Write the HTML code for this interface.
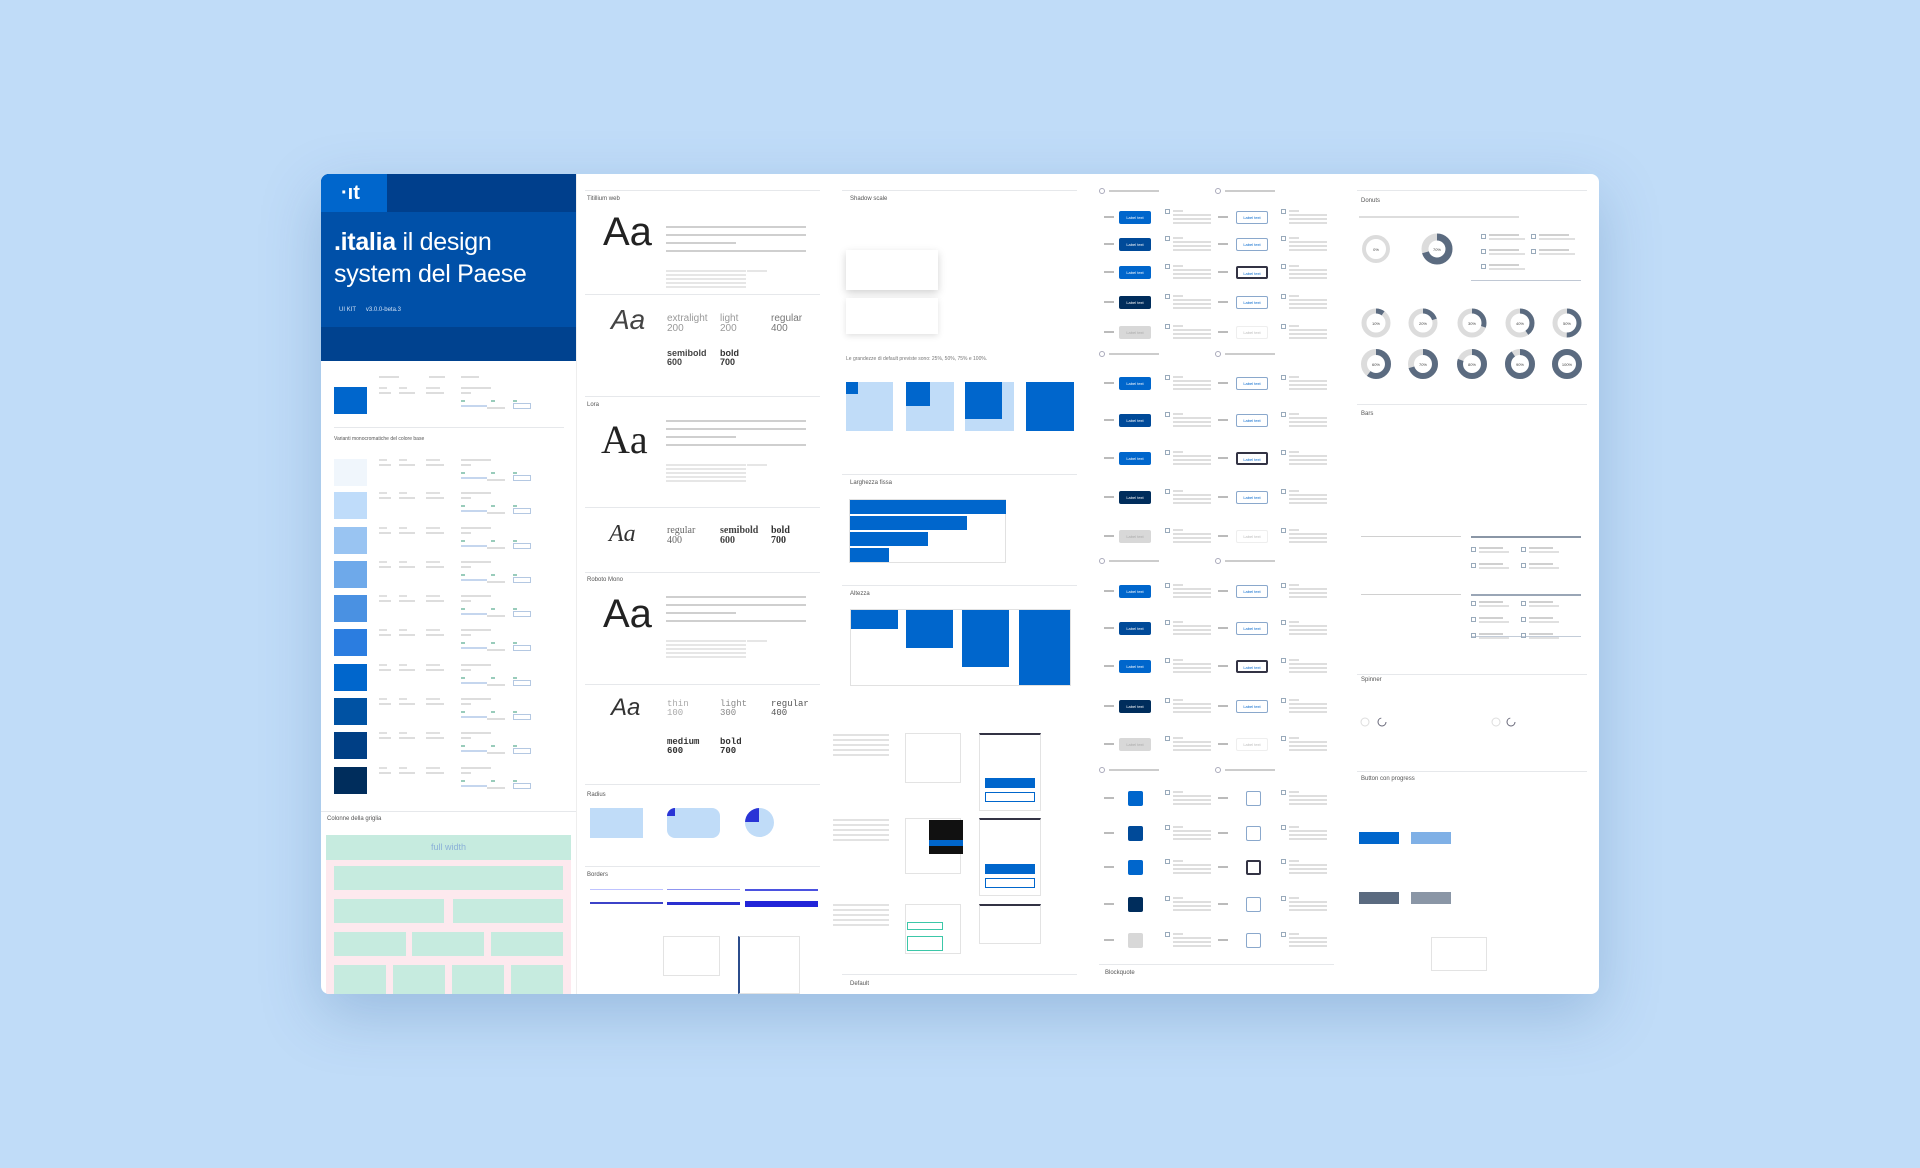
<!DOCTYPE html>
<html><head><meta charset="utf-8">
<style>
*{margin:0;padding:0;box-sizing:border-box}
body{width:1920px;height:1168px;background:#c0dcf8;overflow:hidden;font-family:"Liberation Sans",sans-serif;position:relative}
.card{position:absolute;left:321px;top:174px;width:1278px;height:820px;background:#fff;border-radius:8px;overflow:hidden;box-shadow:0 20px 60px rgba(40,90,150,.25)}
.a{position:absolute}
.ln{position:absolute;height:2px;background:#d4d8dd}
.hr{position:absolute;height:1px;background:#e6e8eb}
.lbl{position:absolute;font-size:5px;color:#777}
.h{position:absolute;font-size:6px;color:#555}
.big{position:absolute;color:#222;line-height:1}
.btn{position:absolute;width:32px;height:13px;border-radius:2px;font-size:4px;color:#fff;text-align:center;line-height:13px}
.ob{position:absolute;width:32px;height:13px;border:1px solid #8aa8cc;border-radius:2px;font-size:4px;color:#06c;text-align:center;line-height:11px;background:#fff}
</style></head><body>
<div class="card" id="c">
 <div class="a" style="left:0;top:0;width:255px;height:187px;background:#0050a8"></div>
 <div class="a" style="left:0;top:0;width:255px;height:38px;background:#003f8c"></div>
 <div class="a" style="left:0;top:0;width:66px;height:38px;background:#0066cc;color:#fff;font-weight:bold;font-size:20px;line-height:38px;padding-left:20px">·ıt</div>
 <div class="a" style="left:0;top:153px;width:255px;height:34px;background:#00428f"></div>
 <div class="a" style="left:13px;top:52px;color:#fff;font-size:25px;line-height:32px;width:210px;letter-spacing:-0.3px"><b>.italia</b> il design system del Paese</div>
 <div class="a" style="left:18px;top:133px;color:#cfe0f5;font-size:6px">UI KIT &nbsp;&nbsp;&nbsp;&nbsp; v3.0.0-beta.3</div>

 <div class="h" style="left:13px;top:262px;font-size:5px">Varianti monocromatiche del colore base</div>
 <div class="hr" style="left:13px;top:253px;width:230px"></div>
 <div class="h" style="left:6px;top:642px">Colonne della griglia</div>
 <div class="hr" style="left:0;top:637px;width:255px"></div>
 <div class="a" style="left:5px;top:661px;width:245px;height:159px;background:#fde9ee"></div>
 <div class="a" style="left:5px;top:661px;width:245px;height:25px;background:#c6ebdf;color:#8bb0d8;font-size:9px;text-align:center;line-height:25px">full width</div>
 <div class="a" style="left:13px;top:692px;width:229px;height:24px;background:#c6ebdf"></div>
 <div class="a" style="left:13px;top:725px;width:110px;height:24px;background:#c6ebdf"></div>
 <div class="a" style="left:132px;top:725px;width:110px;height:24px;background:#c6ebdf"></div>
 <div class="a" style="left:13px;top:758px;width:72px;height:24px;background:#c6ebdf"></div>
 <div class="a" style="left:91px;top:758px;width:72px;height:24px;background:#c6ebdf"></div>
 <div class="a" style="left:170px;top:758px;width:72px;height:24px;background:#c6ebdf"></div>
 <div class="a" style="left:13px;top:791px;width:52px;height:29px;background:#c6ebdf"></div>
 <div class="a" style="left:72px;top:791px;width:52px;height:29px;background:#c6ebdf"></div>
 <div class="a" style="left:131px;top:791px;width:52px;height:29px;background:#c6ebdf"></div>
 <div class="a" style="left:190px;top:791px;width:52px;height:29px;background:#c6ebdf"></div>

 <div class="hr" style="left:264px;top:16px;width:235px"></div>
 <div class="h" style="left:266px;top:22px">Titillium web</div>
 <div class="big" style="left:282px;top:38px;font-size:40px;font-weight:300">Aa</div>
 <div class="hr" style="left:264px;top:120px;width:235px"></div>
 <div class="big" style="left:290px;top:132px;font-size:28px;font-style:italic;font-weight:300;color:#444">Aa</div>
 <div class="big" style="left:346px;top:140px;font-size:10px;color:#999">extralight<br>200</div>
 <div class="big" style="left:399px;top:140px;font-size:10px;color:#999">light<br>200</div>
 <div class="big" style="left:450px;top:140px;font-size:10px;color:#777">regular<br>400</div>
 <div class="big" style="left:346px;top:175px;font-size:9px;font-weight:bold;color:#444">semibold<br>600</div>
 <div class="big" style="left:399px;top:175px;font-size:9px;font-weight:bold;color:#333">bold<br>700</div>
 <div class="hr" style="left:264px;top:222px;width:235px"></div>
 <div class="h" style="left:266px;top:228px">Lora</div>
 <div class="big" style="left:280px;top:246px;font-size:40px;font-family:'Liberation Serif',serif">Aa</div>
 <div class="hr" style="left:264px;top:333px;width:235px"></div>
 <div class="big" style="left:288px;top:348px;font-size:24px;font-style:italic;font-family:'Liberation Serif',serif;color:#333">Aa</div>
 <div class="big" style="left:346px;top:352px;font-size:10px;font-family:'Liberation Serif',serif;color:#666">regular<br>400</div>
 <div class="big" style="left:399px;top:352px;font-size:10px;font-weight:bold;font-family:'Liberation Serif',serif;color:#444">semibold<br>600</div>
 <div class="big" style="left:450px;top:352px;font-size:10px;font-weight:bold;font-family:'Liberation Serif',serif;color:#333">bold<br>700</div>
 <div class="hr" style="left:264px;top:398px;width:235px"></div>
 <div class="h" style="left:266px;top:403px">Roboto Mono</div>
 <div class="big" style="left:282px;top:420px;font-size:40px;font-weight:300">Aa</div>
 <div class="hr" style="left:264px;top:510px;width:235px"></div>
 <div class="big" style="left:290px;top:522px;font-size:24px;font-style:italic;color:#333">Aa</div>
 <div class="big" style="left:346px;top:526px;font-size:9px;font-family:'Liberation Mono',monospace;color:#aaa">thin<br>100</div>
 <div class="big" style="left:399px;top:526px;font-size:9px;font-family:'Liberation Mono',monospace;color:#888">light<br>300</div>
 <div class="big" style="left:450px;top:526px;font-size:9px;font-family:'Liberation Mono',monospace;color:#555">regular<br>400</div>
 <div class="big" style="left:346px;top:564px;font-size:9px;font-weight:bold;font-family:'Liberation Mono',monospace;color:#333">medium<br>600</div>
 <div class="big" style="left:399px;top:564px;font-size:9px;font-weight:bold;font-family:'Liberation Mono',monospace;color:#333">bold<br>700</div>
 <div class="hr" style="left:264px;top:610px;width:235px"></div>
 <div class="h" style="left:266px;top:618px">Radius</div>
 <div class="a" style="left:269px;top:634px;width:53px;height:30px;background:#c0dcf8"></div>
 <div class="a" style="left:346px;top:634px;width:53px;height:30px;background:#c0dcf8;border-radius:8px;overflow:hidden"><div style="width:8px;height:8px;background:#2a34d6"></div></div>
 <div class="a" style="left:424px;top:634px;width:29px;height:29px;background:#c0dcf8;border-radius:50%;overflow:hidden"><div style="width:14px;height:14px;background:#2a34d6"></div></div>
 <div class="hr" style="left:264px;top:692px;width:235px"></div>
 <div class="h" style="left:266px;top:698px">Borders</div>
 <div class="a" style="left:269px;top:715px;width:73px;height:1px;background:#bfc3ff"></div>
 <div class="a" style="left:346px;top:715px;width:73px;height:1px;background:#8f95f0"></div>
 <div class="a" style="left:424px;top:715px;width:73px;height:2px;background:#4b52e0"></div>
 <div class="a" style="left:269px;top:728px;width:73px;height:2px;background:#3c42c8"></div>
 <div class="a" style="left:346px;top:728px;width:73px;height:3px;background:#2a30d0"></div>
 <div class="a" style="left:424px;top:727px;width:73px;height:6px;background:#2224d8"></div>
 <div class="a" style="left:342px;top:762px;width:57px;height:40px;border:1px solid #e3e3e3"></div>
 <div class="a" style="left:417px;top:762px;width:62px;height:58px;border:1px solid #e3e3e3;border-left:2px solid #2b4c8c"></div>

 <div class="hr" style="left:521px;top:16px;width:235px"></div>
 <div class="h" style="left:529px;top:22px">Shadow scale</div>
 <div class="a" style="left:525px;top:76px;width:92px;height:40px;background:#fff;box-shadow:0 3px 8px rgba(0,0,0,.18)"></div>
 <div class="a" style="left:525px;top:124px;width:92px;height:36px;background:#fff;box-shadow:0 2px 6px rgba(0,0,0,.12)"></div>
 <div class="lbl" style="left:525px;top:182px">Le grandezze di default previste sono: 25%, 50%, 75% e 100%.</div>
 <div class="a" style="left:525px;top:208px;width:47px;height:49px;background:#c0dcf8"><div style="width:12px;height:12px;background:#0066cc"></div></div>
 <div class="a" style="left:585px;top:208px;width:48px;height:49px;background:#c0dcf8"><div style="width:24px;height:24px;background:#0066cc"></div></div>
 <div class="a" style="left:644px;top:208px;width:49px;height:49px;background:#c0dcf8"><div style="width:37px;height:37px;background:#0066cc"></div></div>
 <div class="a" style="left:705px;top:208px;width:48px;height:49px;background:#0066cc"></div>
 <div class="hr" style="left:521px;top:300px;width:235px"></div>
 <div class="h" style="left:529px;top:306px">Larghezza fissa</div>
 <div class="a" style="left:528px;top:325px;width:157px;height:64px;border:1px solid #e1e1e1"></div>
 <div class="a" style="left:529px;top:326px;width:156px;height:14px;background:#0066cc"></div>
 <div class="a" style="left:529px;top:342px;width:117px;height:14px;background:#0066cc"></div>
 <div class="a" style="left:529px;top:358px;width:78px;height:14px;background:#0066cc"></div>
 <div class="a" style="left:529px;top:374px;width:39px;height:14px;background:#0066cc"></div>
 <div class="hr" style="left:521px;top:411px;width:235px"></div>
 <div class="h" style="left:529px;top:417px">Altezza</div>
 <div class="a" style="left:529px;top:435px;width:221px;height:77px;border:1px solid #e1e1e1"></div>
 <div class="a" style="left:530px;top:436px;width:47px;height:19px;background:#0066cc"></div>
 <div class="a" style="left:585px;top:436px;width:47px;height:38px;background:#0066cc"></div>
 <div class="a" style="left:641px;top:436px;width:47px;height:57px;background:#0066cc"></div>
 <div class="a" style="left:698px;top:436px;width:51px;height:75px;background:#0066cc"></div>
 <div class="a" style="left:584px;top:559px;width:56px;height:50px;border:1px solid #e3e3e3"></div>
 <div class="a" style="left:658px;top:559px;width:62px;height:78px;border:1px solid #e3e3e3;border-top:2px solid #334"></div>
 <div class="a" style="left:664px;top:604px;width:50px;height:10px;background:#0066cc"></div>
 <div class="a" style="left:664px;top:618px;width:50px;height:10px;border:1px solid #06c"></div>
 <div class="a" style="left:584px;top:644px;width:56px;height:56px;border:1px solid #e3e3e3"></div>
 <div class="a" style="left:608px;top:646px;width:34px;height:34px;background:#111"><div style="margin-top:20px;height:6px;background:#0066cc"></div></div>
 <div class="a" style="left:658px;top:644px;width:62px;height:78px;border:1px solid #e3e3e3;border-top:2px solid #334"></div>
 <div class="a" style="left:664px;top:690px;width:50px;height:10px;background:#0066cc"></div>
 <div class="a" style="left:664px;top:704px;width:50px;height:10px;border:1px solid #06c"></div>
 <div class="a" style="left:584px;top:730px;width:56px;height:50px;border:1px solid #e3e3e3"></div>
 <div class="a" style="left:586px;top:748px;width:36px;height:8px;border:1px solid #3cc7a8"></div>
 <div class="a" style="left:586px;top:762px;width:36px;height:15px;border:1px solid #3cc7a8"></div>
 <div class="a" style="left:658px;top:730px;width:62px;height:40px;border:1px solid #e3e3e3;border-top:2px solid #334"></div>
 <div class="hr" style="left:521px;top:800px;width:235px"></div>
 <div class="h" style="left:529px;top:807px">Default</div>

 <div class="hr" style="left:1036px;top:16px;width:230px"></div>
 <div class="h" style="left:1040px;top:24px">Donuts</div>
 <div class="hr" style="left:1036px;top:230px;width:230px"></div>
 <div class="h" style="left:1040px;top:237px">Bars</div>
 <div class="hr" style="left:1036px;top:500px;width:230px"></div>
 <div class="h" style="left:1040px;top:503px">Spinner</div>
 <div class="hr" style="left:1036px;top:597px;width:230px"></div>
 <div class="h" style="left:1040px;top:602px">Button con progress</div>
 <div class="a" style="left:1038px;top:658px;width:40px;height:12px;background:#0066cc"></div>
 <div class="a" style="left:1090px;top:658px;width:40px;height:12px;background:#7fb0e6"></div>
 <div class="a" style="left:1038px;top:718px;width:40px;height:12px;background:#5b6b80"></div>
 <div class="a" style="left:1090px;top:718px;width:40px;height:12px;background:#8a96a6"></div>
 <div class="a" style="left:1110px;top:763px;width:56px;height:34px;border:1px solid #e3e3e3"></div>
 <div class="a" style="left:1150px;top:106px;width:110px;height:1px;background:#c0c8d4"></div>
 <div class="a" style="left:1150px;top:362px;width:110px;height:2px;background:#8a96a6"></div>
 <div class="a" style="left:1040px;top:362px;width:100px;height:1px;background:#d0d0d0"></div>
 <div class="a" style="left:1040px;top:420px;width:100px;height:1px;background:#d0d0d0"></div>
 <div class="a" style="left:1150px;top:420px;width:110px;height:2px;background:#9aa6b6"></div>
 <div class="a" style="left:1150px;top:462px;width:110px;height:1px;background:#c3ccd8"></div>
 <div class="hr" style="left:778px;top:790px;width:235px"></div>
 <div class="h" style="left:784px;top:796px">Blockquote</div>
 <div class="a" style="left:255px;top:0;width:1px;height:820px;background:#eee"></div>
 <svg class="a" id="dn" style="left:0;top:0" width="1278" height="820"></svg>
</div>
<script>
var c=document.getElementById('c');
function add(h){c.insertAdjacentHTML('beforeend',h)}
function ln(x,y,w,col){add('<div class="ln" style="left:'+x+'px;top:'+y+'px;width:'+w+'px;'+(col?'background:'+col:'')+'"></div>')}
var cols=['#0066cc','#f0f6fc','#bfdcfa','#99c4f2','#6ea9ea','#4a91e2','#2b7de0','#0066cc','#0052a3','#003f85','#002d5c'];
var ys=[213,285,318,353,387,421,455,490,524,558,593];
cols.forEach(function(cl,i){var y=ys[i];
 add('<div class="a" style="left:13px;top:'+y+'px;width:33px;height:27px;background:'+cl+'"></div>');
 ln(58,y,8,'#e0e0e0');ln(78,y,8,'#e0e0e0');ln(58,y+5,12,'#ddd');ln(78,y+5,16,'#ddd');ln(105,y,14,'#e0e0e0');ln(105,y+5,18,'#ddd');
 ln(140,y,30,'#ddd');ln(140,y+5,10,'#ddd');ln(140,y+13,4,'#9cb');ln(170,y+13,4,'#9cb');ln(192,y+13,4,'#9cb');
 ln(140,y+18,26,'#c5d6ee');ln(166,y+20,18,'#ddd');
 add('<div class="a" style="left:192px;top:'+(y+16)+'px;width:18px;height:6px;border:1px solid #b4c8e2"></div>');
});
ln(58,202,20,'#ddd');ln(108,202,16,'#ddd');ln(140,202,18,'#ddd');
[[52,48],[246,46],[422,46]].forEach(function(p){var y=p[0];
 for(var k=0;k<4;k++)ln(345,y+k*8,(k==2?70:140),'#cfcfcf');
 for(var k=0;k<5;k++)ln(345,y+44+k*4,80,'#e6e6e6');
 ln(426,y+44,20,'#e6e6e6');
});
var rows1=[37,64,92,122,152],rows2=[203,240,278,317,356],rows3=[411,448,486,526,564],rows4=[618,653,687,724,760];
function grp(rows,sq,hdr){
 add('<div class="a" style="left:778px;top:'+hdr+'px;width:6px;height:6px;border:1px solid #aab;border-radius:50%"></div>');
 add('<div class="a" style="left:894px;top:'+hdr+'px;width:6px;height:6px;border:1px solid #aab;border-radius:50%"></div>');
 ln(788,hdr+2,50,'#ccc');ln(904,hdr+2,50,'#ccc');
 var fill=['#0066cc','#004a99','#0066cc','#002d5c','#d8d8d8'];
 rows.forEach(function(y,i){
  ln(783,y+5,10,'#bbb');ln(897,y+5,10,'#bbb');
  if(sq){add('<div class="btn" style="left:807px;top:'+(y-1)+'px;width:15px;height:15px;background:'+fill[i]+'"></div>');
   add('<div class="ob" style="left:925px;top:'+(y-1)+'px;width:15px;height:15px;'+(i==2?'border:2px solid #334':'')+'"></div>');}
  else{add('<div class="btn" style="left:798px;top:'+y+'px;background:'+fill[i]+';'+(i==4?'color:#aaa':'')+'">Label text</div>');
   add('<div class="ob" style="left:915px;top:'+y+'px;'+(i==2?'border:2px solid #334':'')+(i==4?'border-color:#eee;color:#bbb':'')+'">Label text</div>');}
  add('<div class="a" style="left:844px;top:'+(y-2)+'px;width:5px;height:5px;border:1px solid #9ab"></div>');
  add('<div class="a" style="left:960px;top:'+(y-2)+'px;width:5px;height:5px;border:1px solid #9ab"></div>');
  for(var k=0;k<4;k++){ln(852,y-1+k*4,k?38:10,'#dedede');ln(968,y-1+k*4,k?38:10,'#dedede');}
 });
}
grp(rows1,0,14);grp(rows2,0,177);grp(rows3,0,384);grp(rows4,1,593);
[[560],[645],[730]].forEach(function(p){for(var k=0;k<5;k++)ln(512,p[0]+k*5,56,'#e2e2e2')});
var svg=document.getElementById('dn'),s='';
function donut(cx,cy,r,w,p){var C=2*Math.PI*r;
 s+='<circle cx="'+cx+'" cy="'+cy+'" r="'+r+'" fill="none" stroke="#dcdcdc" stroke-width="'+w+'"/>';
 s+='<circle cx="'+cx+'" cy="'+cy+'" r="'+r+'" fill="none" stroke="#5b6b80" stroke-width="'+w+'" stroke-dasharray="'+(C*p)+' '+C+'" transform="rotate(-90 '+cx+' '+cy+')"/>';
 s+='<text x="'+cx+'" y="'+(cy+2)+'" font-size="4" text-anchor="middle" fill="#444" font-family="Liberation Sans">'+Math.round(p*100)+'%</text>';}
donut(1055,75,12,4,0);donut(1116,75,12,7,0.7);
var xs=[1055,1102,1151,1199,1246];
[0.1,0.2,0.3,0.4,0.5].forEach(function(p,i){donut(xs[i],149,12,5,p)});
[0.6,0.7,0.8,0.9,1].forEach(function(p,i){donut(xs[i],190,12,6,p)});
s+='<circle cx="1044" cy="548" r="4" fill="none" stroke="#ddd" stroke-width="1"/><circle cx="1061" cy="548" r="4" fill="none" stroke="#667" stroke-width="1" stroke-dasharray="18 30"/>';
s+='<circle cx="1175" cy="548" r="4" fill="none" stroke="#ddd" stroke-width="1"/><circle cx="1190" cy="548" r="4" fill="none" stroke="#667" stroke-width="1" stroke-dasharray="18 30"/>';
svg.innerHTML=s;
[[1160,60],[1160,75],[1160,90],[1210,60],[1210,75]].forEach(function(p){add('<div class="a" style="left:'+p[0]+'px;top:'+p[1]+'px;width:5px;height:5px;border:1px solid #9ab"></div>');ln(p[0]+8,p[1],30,'#d0d0d0');ln(p[0]+8,p[1]+4,36,'#e0e0e0')});
ln(1038,42,160,'#ddd');
[[1150,373],[1150,389],[1200,373],[1200,389],[1150,427],[1150,443],[1150,459],[1200,427],[1200,443],[1200,459]].forEach(function(p){add('<div class="a" style="left:'+p[0]+'px;top:'+p[1]+'px;width:5px;height:5px;border:1px solid #9ab"></div>');ln(p[0]+8,p[1],24,'#d0d0d0');ln(p[0]+8,p[1]+4,30,'#e0e0e0')});
</script>
</body></html>
